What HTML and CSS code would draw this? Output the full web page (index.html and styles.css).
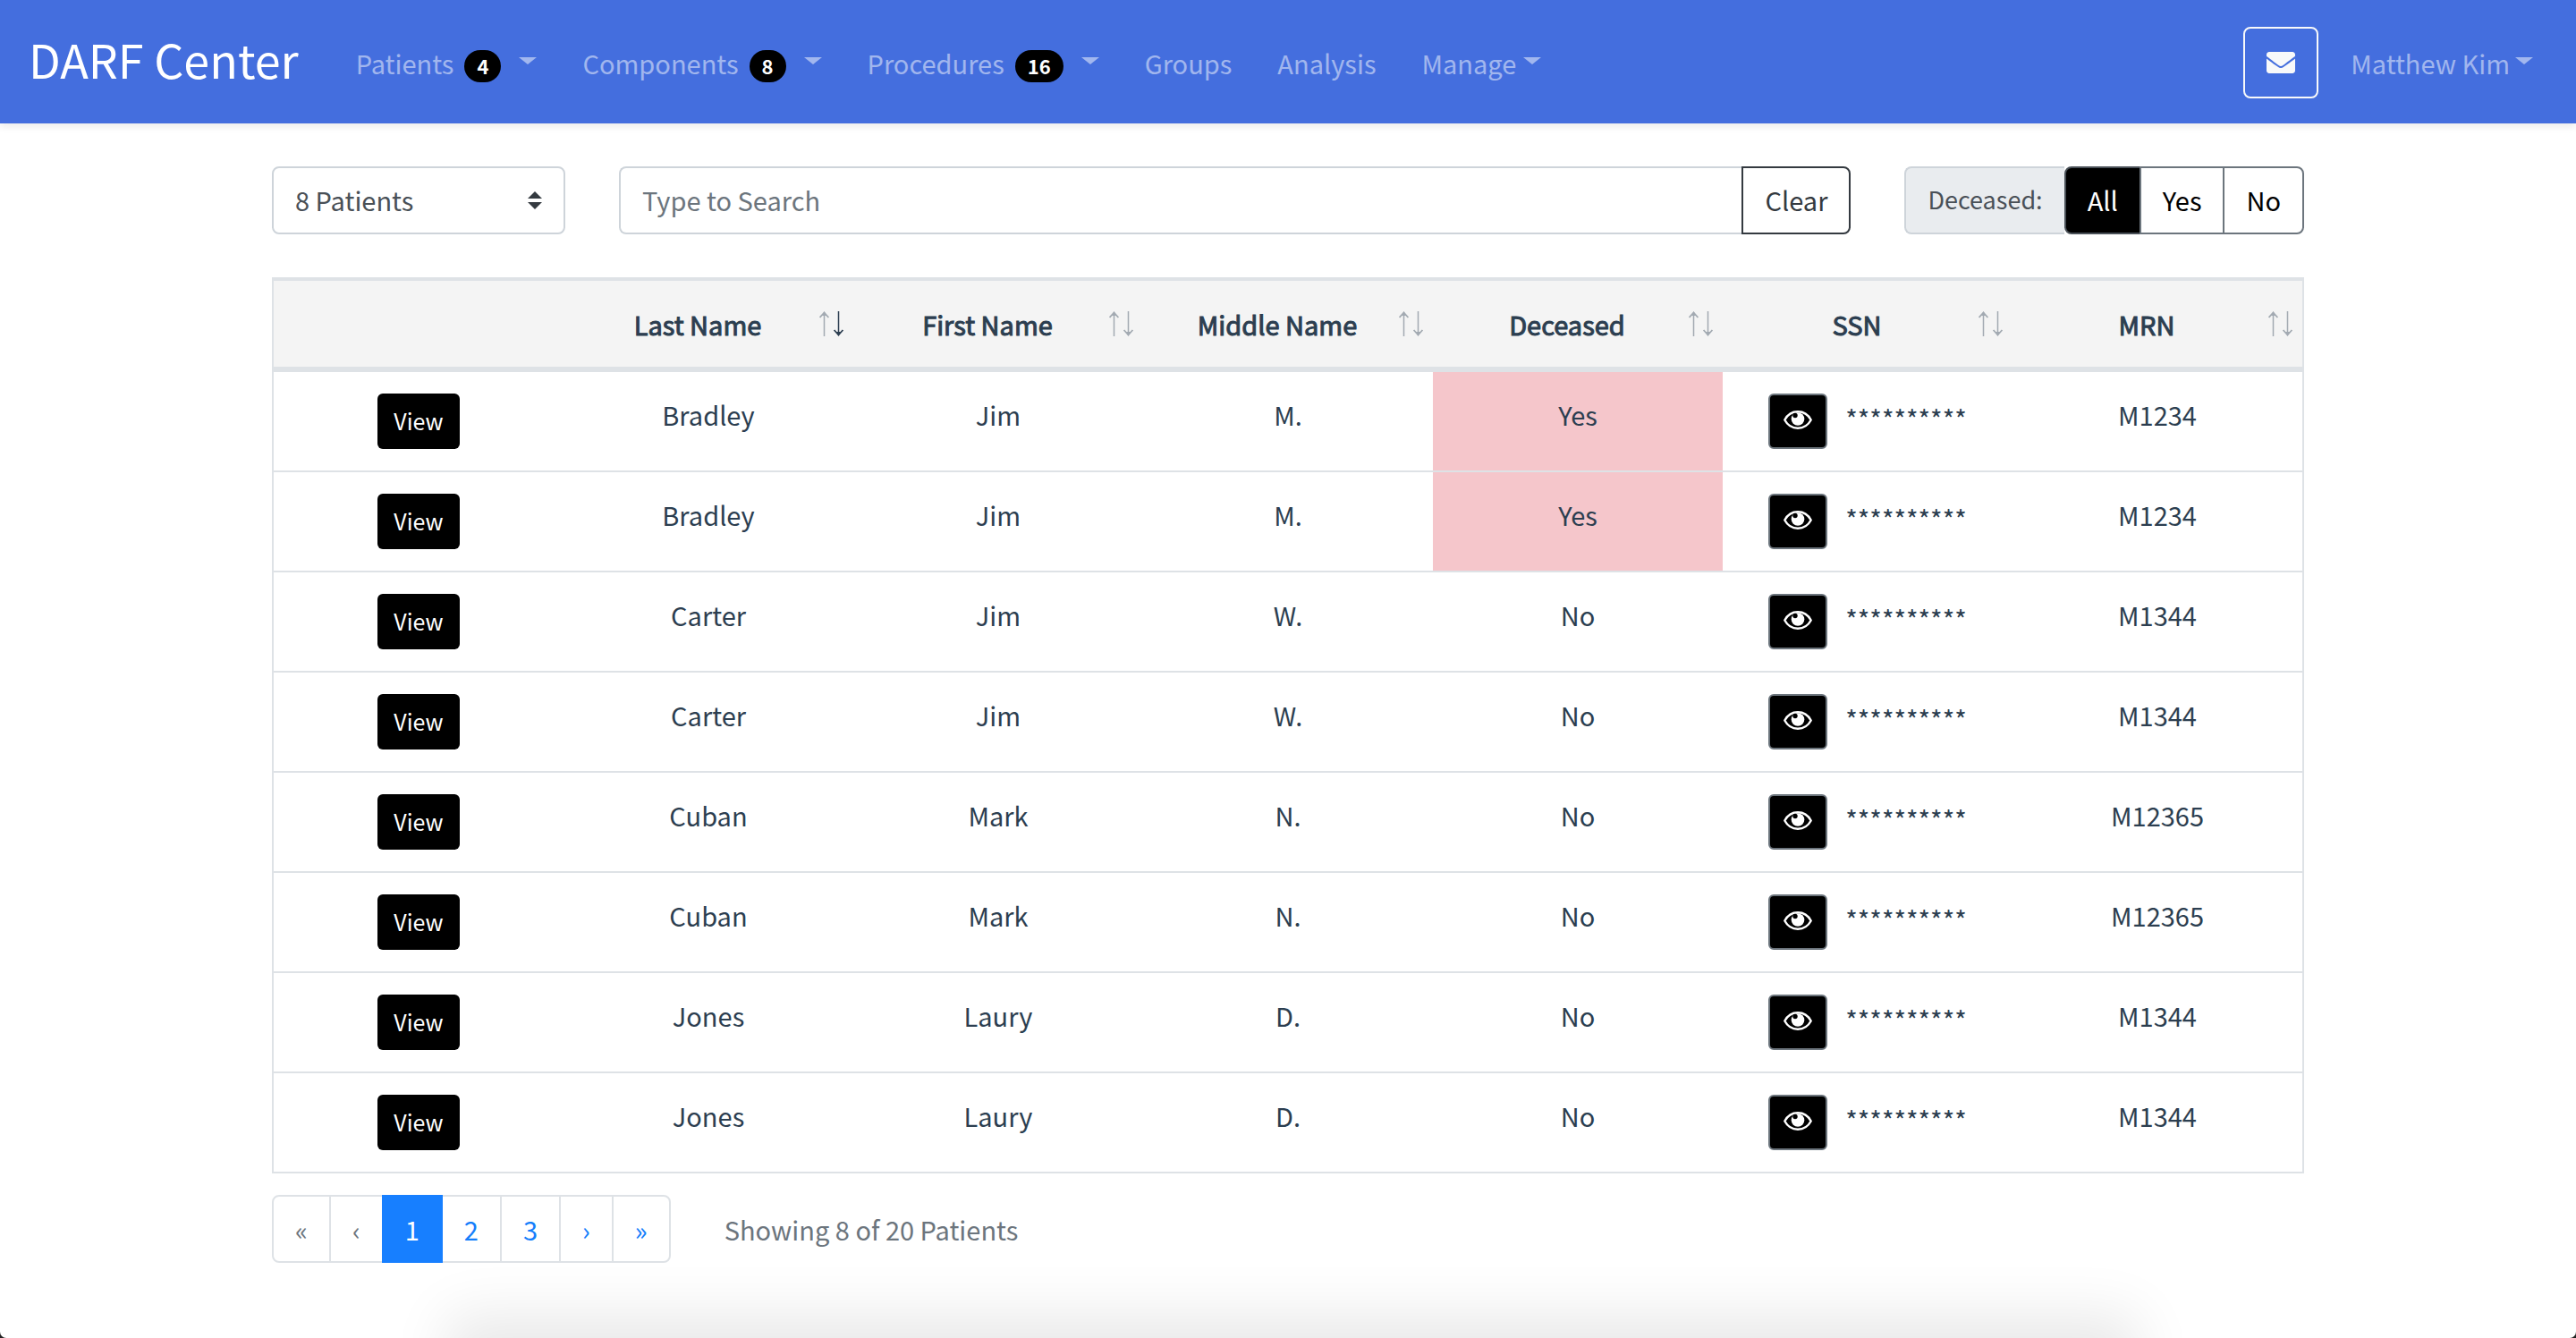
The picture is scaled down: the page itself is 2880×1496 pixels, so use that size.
FILE: index.html
```html
<!DOCTYPE html>
<html lang="en">
<head>
<meta charset="utf-8">
<title>DARF Center</title>
<link rel="stylesheet" href="styles.css">
</head>
<body>
<svg class="sprite" aria-hidden="true">
  <symbol id="eye" viewBox="0 0 32 22">
    <path d="M1.300 10.500C4.500 4.500 10 1.300 16 1.300s11.500 3.200 14.700 9.200C27.500 16.500 22 19.700 16 19.700S4.500 16.500 1.300 10.500z" fill="none" stroke="#fff" stroke-width="2.400" stroke-linejoin="round"/>
    <circle cx="16" cy="9.500" r="7.300" fill="#fff"/>
    <circle cx="13" cy="5.500" r="2.700" fill="#000"/>
  </symbol>
  <symbol id="sort" viewBox="0 0 28 28">
    <g fill="none" stroke="currentColor">
      <g class="sort-up"><path d="M5.500 28V2" stroke-width="1.500"/><path d="M0.600 7L5.500 1.500 10.400 7" stroke-width="1.800"/><path d="M5.500 0l2.500 5h-5z" fill="currentColor" stroke="none"/></g>
      <g class="sort-down"><path d="M21.500 0v26" stroke-width="1.500"/><path d="M16.600 21l4.900 5.500 4.900-5.500" stroke-width="1.800"/><path d="M21.500 28l2.500-5h-5z" fill="currentColor" stroke="none"/></g>
    </g>
  </symbol>
</svg>

<nav class="navbar">
  <a class="brand" href="#">DARF Center</a>
  <div class="nav-links">
    <a class="nav-link" href="#">Patients <span class="badge">4</span><span class="caret caret-far"></span></a>
    <a class="nav-link" href="#">Components <span class="badge">8</span><span class="caret caret-far"></span></a>
    <a class="nav-link" href="#">Procedures <span class="badge">16</span><span class="caret caret-far"></span></a>
    <a class="nav-link" href="#">Groups</a>
    <a class="nav-link" href="#">Analysis</a>
    <a class="nav-link" href="#">Manage<span class="caret"></span></a>
  </div>
  <button class="mail" type="button" aria-label="Messages">
    <svg width="32" height="24" viewBox="0 64 512 384" fill="#f8f9fa"><path d="M502.300 190.800c3.900-3.100 9.700-.2 9.700 4.700V400c0 26.500-21.500 48-48 48H48c-26.500 0-48-21.500-48-48V195.600c0-5 5.700-7.800 9.700-4.700 22.400 17.400 52.100 39.500 154.100 113.600 21.100 15.400 56.700 47.800 92.200 47.600 35.700.3 72-32.800 92.300-47.600 102-74.100 131.600-96.300 154-113.700zM256 320c23.200.4 56.600-29.200 73.400-41.400 132.700-96.300 142.800-104.700 173.400-128.700 5.800-4.500 9.200-11.500 9.200-18.900v-19c0-26.500-21.500-48-48-48H48c-26.500 0-48 21.500-48 48v19c0 7.400 3.400 14.300 9.200 18.900 30.600 23.900 40.700 32.400 173.400 128.700 16.800 12.200 50.200 41.800 73.400 41.400z"/></svg>
  </button>
  <a class="nav-link" href="#">Matthew Kim<span class="caret"></span></a>
</nav>

<main class="page">
  <div class="toolbar">
    <select class="page-size" aria-label="Patients per page"><option>8 Patients</option></select>
    <div class="group search">
      <input class="search-input" type="text" placeholder="Type to Search" aria-label="Search">
      <button class="btn clear" type="button">Clear</button>
    </div>
    <div class="group">
      <span class="addon">Deceased:</span>
      <div class="group toggle" role="group" aria-label="Deceased">
        <button class="btn active" type="button" aria-pressed="true">All</button>
        <button class="btn" type="button" aria-pressed="false">Yes</button>
        <button class="btn" type="button" aria-pressed="false">No</button>
      </div>
    </div>
  </div>

  <table class="patients">
    <thead>
      <tr>
        <th></th>
        <th class="sortable sorted" aria-sort="ascending">Last Name<svg class="sort"><use href="#sort"/></svg></th>
        <th class="sortable">First Name<svg class="sort"><use href="#sort"/></svg></th>
        <th class="sortable">Middle Name<svg class="sort"><use href="#sort"/></svg></th>
        <th class="sortable">Deceased<svg class="sort"><use href="#sort"/></svg></th>
        <th class="sortable">SSN<svg class="sort"><use href="#sort"/></svg></th>
        <th class="sortable">MRN<svg class="sort"><use href="#sort"/></svg></th>
      </tr>
    </thead>
    <tbody>
      <tr><td><button class="view" type="button">View</button></td><td>Bradley</td><td>Jim</td><td>M.</td><td class="danger">Yes</td><td><div class="ssn"><button class="reveal" type="button" aria-label="Show SSN"><svg><use href="#eye"/></svg></button><span>**********</span></div></td><td>M1234</td></tr>
      <tr><td><button class="view" type="button">View</button></td><td>Bradley</td><td>Jim</td><td>M.</td><td class="danger">Yes</td><td><div class="ssn"><button class="reveal" type="button" aria-label="Show SSN"><svg><use href="#eye"/></svg></button><span>**********</span></div></td><td>M1234</td></tr>
      <tr><td><button class="view" type="button">View</button></td><td>Carter</td><td>Jim</td><td>W.</td><td>No</td><td><div class="ssn"><button class="reveal" type="button" aria-label="Show SSN"><svg><use href="#eye"/></svg></button><span>**********</span></div></td><td>M1344</td></tr>
      <tr><td><button class="view" type="button">View</button></td><td>Carter</td><td>Jim</td><td>W.</td><td>No</td><td><div class="ssn"><button class="reveal" type="button" aria-label="Show SSN"><svg><use href="#eye"/></svg></button><span>**********</span></div></td><td>M1344</td></tr>
      <tr><td><button class="view" type="button">View</button></td><td>Cuban</td><td>Mark</td><td>N.</td><td>No</td><td><div class="ssn"><button class="reveal" type="button" aria-label="Show SSN"><svg><use href="#eye"/></svg></button><span>**********</span></div></td><td>M12365</td></tr>
      <tr><td><button class="view" type="button">View</button></td><td>Cuban</td><td>Mark</td><td>N.</td><td>No</td><td><div class="ssn"><button class="reveal" type="button" aria-label="Show SSN"><svg><use href="#eye"/></svg></button><span>**********</span></div></td><td>M12365</td></tr>
      <tr><td><button class="view" type="button">View</button></td><td>Jones</td><td>Laury</td><td>D.</td><td>No</td><td><div class="ssn"><button class="reveal" type="button" aria-label="Show SSN"><svg><use href="#eye"/></svg></button><span>**********</span></div></td><td>M1344</td></tr>
      <tr><td><button class="view" type="button">View</button></td><td>Jones</td><td>Laury</td><td>D.</td><td>No</td><td><div class="ssn"><button class="reveal" type="button" aria-label="Show SSN"><svg><use href="#eye"/></svg></button><span>**********</span></div></td><td>M1344</td></tr>
    </tbody>
  </table>

  <div class="footer">
    <div class="pagination">
      <button type="button" disabled aria-label="First page">«</button>
      <button type="button" disabled aria-label="Previous page">‹</button>
      <button type="button" class="current">1</button>
      <button type="button">2</button>
      <button type="button">3</button>
      <button type="button" aria-label="Next page">›</button>
      <button type="button" aria-label="Last page">»</button>
    </div>
    <span class="summary">Showing 8 of 20 Patients</span>
  </div>
</main>
<div class="bottom-shadow"></div>
</body>
</html>
```
FILE: styles.css
```css
* { box-sizing: border-box; }

html { background: #222; }

body {
  margin: 0;
  min-height: 100vh;
  background: #fff;
  border-radius: 0 0 7px 7px;
  font-family: "Noto Sans CJK SC", "Noto Sans", sans-serif;
  font-size: 29px;
  line-height: 46px;
  color: #2c3e50;
}

button, input, select { font: inherit; color: inherit; margin: 0; }
button { cursor: pointer; }
a { text-decoration: none; }
.sprite { display: none; }

/* Navigation bar */
.navbar {
  display: flex;
  align-items: center;
  padding: 30px 48px 28px 32px;
  background: #446ede;
  box-shadow: 0 4px 8px rgba(0, 0, 0, .08);
}
.brand {
  padding-bottom: 8px;
  margin-right: 64px;
  font-size: 52px;
  line-height: 60px;
  color: #fff;
}
.nav-links { display: flex; gap: 51px; flex: 1; }
.nav-link {
  display: flex;
  align-items: center;
  color: rgba(255, 255, 255, .5);
  white-space: nowrap;
}
.badge {
  margin: 8px 0 0 12px;
  padding: 0 14px 2px;
  border-radius: 18px;
  background: #000;
  color: #fff;
  font-size: 22px;
  font-weight: 700;
  line-height: 34px;
}
.caret {
  margin: 0 0 4px 8px;
  border: 10px solid transparent;
  border-top: 8px solid;
  border-bottom: 0;
}
.caret-far { margin-left: 20px; }
.mail {
  display: flex;
  align-items: center;
  justify-content: center;
  width: 84px;
  height: 80px;
  margin-right: 36px;
  padding: 0;
  border: 2px solid #f8f9fa;
  border-radius: 8px;
  background: transparent;
}
.mail + .nav-link .caret { margin-left: 6px; }

/* Toolbar */
.page { padding: 48px 304px 0; }
.toolbar { display: flex; gap: 60px; margin-bottom: 48px; }
.page-size {
  appearance: none;
  width: 328px;
  height: 76px;
  padding: 0 24px 2px;
  border: 2px solid #ced4da;
  border-radius: 8px;
  color: #495057;
  background: #fff url("data:image/svg+xml,%3csvg xmlns='http://www.w3.org/2000/svg' viewBox='0 0 4 5'%3e%3cpath fill='%23343a40' d='M2 0L0 2h4zm0 5L0 3h4z'/%3e%3c/svg%3e") no-repeat right 24px center / 16px 20px;
}
.group { display: flex; height: 76px; }
.search { flex: 1; }
.search-input {
  flex: 1;
  min-width: 0;
  padding: 0 24px 2px;
  border: 2px solid #ced4da;
  border-right: 0;
  border-radius: 8px 0 0 8px;
  background: #fff;
}
.search-input::placeholder { color: #6c757d; opacity: 1; }
.btn {
  padding: 0 24px 2px;
  border: 2px solid #6c757d;
  background: #fff;
  color: #000;
}
.clear {
  border-color: #343a40;
  border-radius: 0 8px 8px 0;
  color: #343a40;
}
.addon {
  padding: 12px 24px;
  border: 2px solid #ced4da;
  border-right: 0;
  border-radius: 8px 0 0 8px;
  background: #e9ecef;
  color: #495057;
  font-size: 27px;
}
.toggle .btn + .btn { margin-left: -2px; }
.toggle .btn:first-child { border-radius: 8px 0 0 8px; }
.toggle .btn:last-child { border-radius: 0 8px 8px 0; }
.toggle .active { background: #000; color: #fff; border-color: #495057; }

/* Patient table */
.patients {
  width: 100%;
  table-layout: fixed;
  border-collapse: separate;
  border-spacing: 0;
  border: 2px solid #dee2e6;
  border-bottom: 0;
  text-align: center;
}
.patients th {
  padding: 24px;
  border-top: 2px solid #dee2e6;
  border-bottom: 6px solid #dee2e6;
  background: #f4f4f4;
  font-weight: 400;
  line-height: 48px;
  -webkit-text-stroke: 1px;
}
.patients .sortable { position: relative; padding-right: 48px; }
.sort {
  position: absolute;
  top: 34px;
  right: 10px;
  width: 28px;
  height: 28px;
}
.sort-up, .sort-down { opacity: .4; }
.sorted .sort { --down: 1; }
.sort-down { opacity: var(--down, .4); }
.patients td {
  padding: 24px;
  border-bottom: 2px solid #dee2e6;
  vertical-align: top;
}
.patients .danger { background: #f5c6cb; }
.view, .reveal {
  height: 62px;
  border-radius: 6px;
  background: #000;
  color: #fff;
}
.view {
  display: block;
  margin: 0 auto;
  padding: 0 18px 2px;
  border: 0;
  font-size: 25px;
}
.ssn { display: flex; justify-content: center; gap: 20px; }
.ssn span { padding-top: 4px; }
.reveal {
  display: flex;
  align-items: center;
  justify-content: center;
  width: 66px;
  padding: 0 0 2px;
  border: 2px solid #6c757d;
}
.reveal svg { width: 32px; height: 22px; }

/* Pagination */
.footer {
  display: flex;
  align-items: center;
  gap: 60px;
  margin-top: 24px;
}
.pagination { display: flex; }
.pagination button {
  height: 76px;
  padding: 0 24px;
  border: 2px solid #dee2e6;
  background: #fff;
  color: #147efb;
}
.pagination button + button { margin-left: -2px; }
.pagination button:first-child { border-radius: 8px 0 0 8px; }
.pagination button:last-child { border-radius: 0 8px 8px 0; }
.pagination button:disabled { color: #6c757d; }
.pagination .current {
  position: relative;
  border-color: #177fff;
  background: #177fff;
  color: #fff;
}
.summary { color: #6c757d; }

.bottom-shadow {
  position: fixed;
  top: 100%;
  left: 500px;
  right: 490px;
  height: 400px;
  box-shadow: 0 -26px 60px rgba(0, 0, 0, .09);
}
```
